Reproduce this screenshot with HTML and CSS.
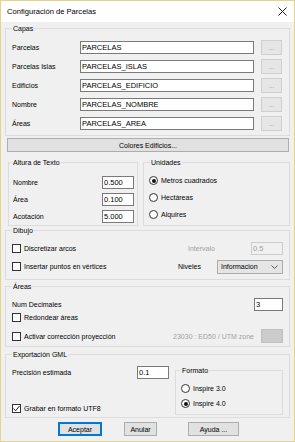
FILE: index.html
```html
<!DOCTYPE html>
<html lang="es">
  <head>
    <meta charset="UTF-8" />
    <meta name="viewport" content="width=device-width, initial-scale=1.0" />
    <title>Configuración de Parcelas</title>
    <link rel="stylesheet" href="styles.css">
  </head>
  <body>
    <div class="window">
      <div class="titlebar">
        <span class="title">Configuración de Parcelas</span>
        <svg class="close" width="9" height="9" viewBox="0 0 9 9"><path d="M0.5 0.5L8.5 8.5M8.5 0.5L0.5 8.5" stroke="#222" stroke-width="1" fill="none"/></svg>
      </div>

      <div class="content">
        <fieldset class="group capas">
          <legend>Capas</legend>
          <div class="layer-row">
            <label>Parcelas</label>
            <input class="field layer" value="PARCELAS">
            <button class="btn dots">...</button>
          </div>
          <div class="layer-row">
            <label>Parcelas Islas</label>
            <input class="field layer" value="PARCELAS_ISLAS">
            <button class="btn dots">...</button>
          </div>
          <div class="layer-row">
            <label>Edificios</label>
            <input class="field layer" value="PARCELAS_EDIFICIO">
            <button class="btn dots">...</button>
          </div>
          <div class="layer-row">
            <label>Nombre</label>
            <input class="field layer" value="PARCELAS_NOMBRE">
            <button class="btn dots">...</button>
          </div>
          <div class="layer-row">
            <label>Áreas</label>
            <input class="field layer" value="PARCELAS_AREA">
            <button class="btn dots">...</button>
          </div>
        </fieldset>

        <button class="btn colores">Colores Edificios...</button>

        <div class="pair">
          <fieldset class="group altura">
            <legend>Altura de Texto</legend>
            <div class="num-row"><label>Nombre</label><input class="field num" value="0.500"></div>
            <div class="num-row"><label>Área</label><input class="field num" value="0.100"></div>
            <div class="num-row"><label>Acotación</label><input class="field num" value="5.000"></div>
          </fieldset>
          <fieldset class="group unidades">
            <legend>Unidades</legend>
            <div class="opt radio-row"><span class="radio on"></span>Metros cuadrados</div>
            <div class="opt radio-row"><span class="radio"></span>Hectáreas</div>
            <div class="opt radio-row"><span class="radio"></span>Alquires</div>
          </fieldset>
        </div>

        <fieldset class="group dibujo">
          <legend>Dibujo</legend>
          <div class="line first">
            <div class="opt grow"><span class="check"></span>Discretizar arcos</div>
            <span class="side muted interval">Intervalo</span>
            <input class="field num" value="0.5" disabled>
          </div>
          <div class="line second">
            <div class="opt grow"><span class="check"></span>Insertar puntos en vértices</div>
            <span class="side levels">Niveles</span>
            <div class="select">
              <span>Informacion</span>
              <svg width="7" height="4" viewBox="0 0 7 4"><path d="M0.5 0.5L3.5 3.5L6.5 0.5" stroke="#555" fill="none"/></svg>
            </div>
          </div>
        </fieldset>

        <fieldset class="group areas">
          <legend>Áreas</legend>
          <div class="line dec">
            <span class="grow">Num Decimales</span>
            <input class="field dec-field" value="3">
          </div>
          <div class="opt round"><span class="check"></span>Redondear áreas</div>
          <div class="line proj">
            <div class="opt grow"><span class="check"></span>Activar corrección proyección</div>
            <span class="muted">23030 : ED50 / UTM zone</span>
            <button class="btn off" disabled></button>
          </div>
        </fieldset>

        <fieldset class="group gml">
          <legend>Exportación GML</legend>
          <div class="gml-body">
            <div class="gml-left">
              <div class="line precision">
                <span class="grow">Precisión estimada</span>
                <input class="field num" value="0.1">
              </div>
              <div class="opt utf"><span class="check on">
                <svg width="7" height="7" viewBox="0 0 7 7"><path d="M0.5 3.5L2.6 5.8L6.6 0.8" stroke="#222" stroke-width="1" fill="none"/></svg>
              </span>Grabar en formato UTF8</div>
            </div>
            <fieldset class="group formato">
              <legend>Formato</legend>
              <div class="opt radio-row"><span class="radio"></span>Inspire 3.0</div>
              <div class="opt radio-row"><span class="radio on"></span>Inspire 4.0</div>
            </fieldset>
          </div>
        </fieldset>

        <div class="actions">
          <button class="btn act default">Aceptar</button>
          <button class="btn act cancel">Anular</button>
          <button class="btn act help">Ayuda ...</button>
        </div>
      </div>
    </div>
  </body>
</html>
```

FILE: styles.css
```css
* {
  box-sizing: border-box;
}
body {
  margin: 0;
  font-family: "Liberation Sans", Arial, sans-serif;
  font-size: 7px;
  line-height: 9px;
  color: #000;
}
.window {
  width: 295px;
  height: 442px;
  border: 1px solid #e3d48c;
  background: #f0f0f0;
  display: flex;
  flex-direction: column;
}
.titlebar {
  height: 21px;
  background: #fff;
  display: flex;
  align-items: center;
  justify-content: space-between;
  padding: 0 7px 0 6px;
}
.title {
  font-size: 7.6px;
}
.content {
  padding: 0 4px;
}

/* group boxes */
.group {
  margin: 0;
  padding: 0 6px 0 6px;
  border: 1px solid #dcdcdc;
  min-width: 0;
}
.group legend {
  padding: 0 1px;
  height: 9px;
  line-height: 9px;
}
.capas {
  margin-top: 2px;
  padding-top: 5px;
  padding-bottom: 2px;
}
.layer-row {
  height: 19px;
  display: flex;
  align-items: center;
}
.layer-row label {
  width: 68px;
}

/* inputs */
.field {
  font-family: inherit;
  font-size: 7.5px;
  line-height: 10px;
  color: #000;
  height: 13px;
  border: 1px solid #7a7a7a;
  background: #fff;
  padding: 0 1px;
  margin: 0;
  outline: none;
}
.field:disabled {
  border-color: #cccccc;
  background: #f0f0f0;
  color: #a0a0a0;
}
.layer {
  width: 174px;
}
.num {
  width: 32px;
}
.dec-field {
  width: 29px;
}

/* buttons */
.btn {
  font: inherit;
  color: #000;
  background: #e1e1e1;
  border: 1px solid #adadad;
  padding: 0;
  margin: 0;
  height: 14px;
}
.dots {
  width: 21px;
  height: 15px;
  margin-left: 7px;
  color: #9a9a9a;
  background: #e6e6e6;
  border-color: #cfcfcf;
}
.colores {
  display: block;
  width: 282px;
  margin: 2px 1px 0 2px;
}
.off {
  width: 22px;
  margin-left: 7px;
  background: #cccccc;
  border-color: #bfbfbf;
}

/* altura / unidades */
.pair {
  display: flex;
  margin-top: 6px;
}
.altura {
  width: 130px;
  margin-left: 3px;
  padding: 7px 3px 0 4px;
}
.altura legend {
  margin-left: -1px;
}
.num-row {
  height: 17px;
  display: flex;
  align-items: center;
  justify-content: space-between;
}
.unidades {
  width: 147px;
  margin-left: 5px;
  padding: 5px 4px 0 5px;
}
.unidades legend {
  margin-left: 1px;
}
.radio-row {
  height: 17px;
}

/* checks and radios */
.opt {
  display: flex;
  align-items: center;
}
.check,
.radio {
  width: 9px;
  height: 9px;
  border: 1px solid #333;
  background: #fff;
  margin-right: 3px;
  flex: none;
  display: flex;
  align-items: center;
  justify-content: center;
}
.radio {
  border-radius: 50%;
}
.radio.on::after {
  content: "";
  width: 4px;
  height: 4px;
  border-radius: 50%;
  background: #111;
}

/* dibujo */
.dibujo {
  padding-top: 4px;
  padding-bottom: 3px;
}
.line {
  display: flex;
  align-items: center;
}
.grow {
  flex: 1;
}
.first {
  height: 18px;
}
.second {
  height: 19px;
}
.muted {
  color: #a0a0a0;
}
.interval {
  width: 63px;
}
.levels {
  width: 39px;
}
.select {
  width: 66px;
  height: 14px;
  background: #e5e5e5;
  border: 1px solid #acacac;
  display: flex;
  align-items: center;
  justify-content: space-between;
  padding: 0 4px 0 3px;
}

/* areas */
.areas {
  margin-top: 2px;
  padding-top: 7px;
  padding-bottom: 3px;
}
.dec {
  height: 13px;
}
.round {
  height: 12px;
}
.proj {
  height: 14px;
  margin-top: 6px;
}

/* gml */
.gml {
  margin-top: 3px;
  padding-top: 7px;
  padding-bottom: 2px;
}
.gml-body {
  display: flex;
}
.gml-left {
  flex: 1;
  display: flex;
  flex-direction: column;
  justify-content: space-between;
}
.precision {
  height: 13px;
  padding-right: 1px;
}
.utf {
  height: 10px;
  margin-bottom: 2px;
}
.formato {
  width: 108px;
  margin-left: 5px;
  padding: 6px 4px 3px 5px;
}
.formato legend {
  margin-left: 0;
}
.formato .radio-row {
  height: 15px;
}

/* bottom buttons */
.actions {
  display: flex;
  margin-top: 4px;
  padding-left: 53px;
}
.act {
  height: 14px;
}
.default {
  width: 44px;
  border: 1px solid #0078d7;
  box-shadow: inset 0 0 0 1px #0078d7;
}
.cancel {
  width: 33px;
  margin-left: 22px;
}
.help {
  width: 51px;
  margin-left: 31px;
}
```
